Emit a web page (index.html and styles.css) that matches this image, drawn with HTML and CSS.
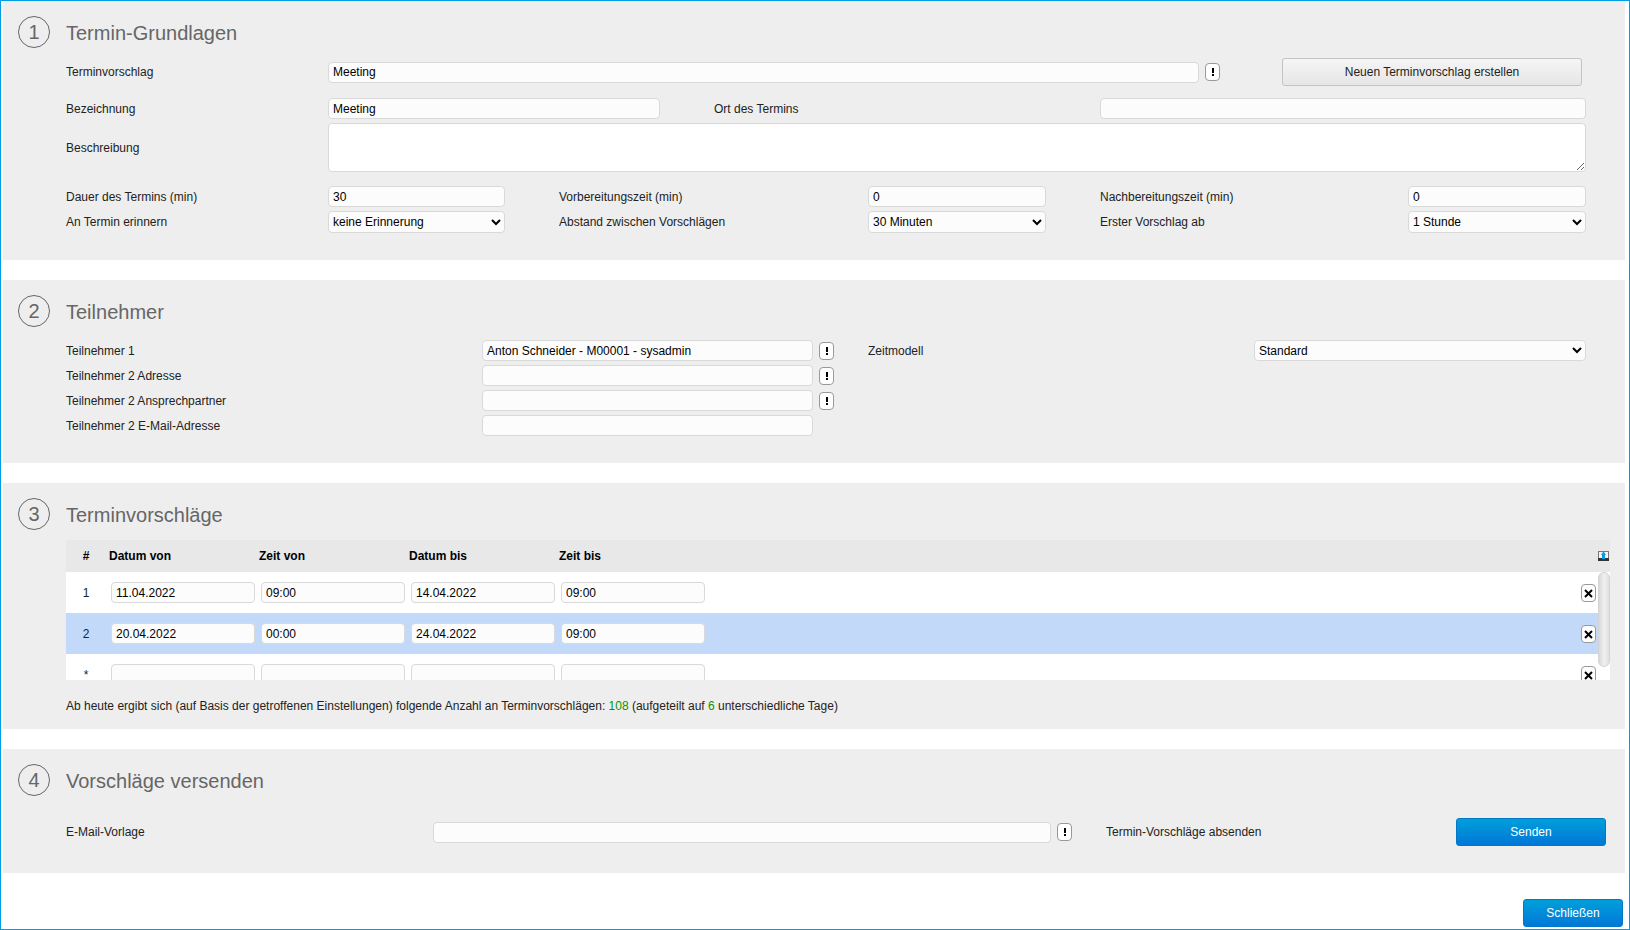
FILE: index.html
```html
<!DOCTYPE html>
<html lang="de">
<head>
    <meta charset="utf-8">
    <title>Terminvorschläge</title>
    <link rel="stylesheet" href="styles.css">
</head>
<body>
<div class="page">
    <svg class="sprite" aria-hidden="true">
        <symbol id="mark" viewBox="0 0 8 8"><path d="M3 0h2v5H3zM3 6h2v2H3z"/></symbol>
        <symbol id="cross" viewBox="0 0 9 9"><path d="M1 1l7 7M8 1L1 8" fill="none" stroke="#000" stroke-width="2"/></symbol>
    </svg>

    <section class="step">
        <h2><span class="number">1</span>Termin-Grundlagen</h2>
        <div class="row row-proposal">
            <label for="proposal">Terminvorschlag</label>
            <div class="lookup">
                <input type="text" id="proposal" value="Meeting">
                <button type="button" class="pick" aria-label="Terminvorschlag auswählen"><svg><use href="#mark"/></svg></button>
            </div>
            <button type="button" class="btn">Neuen Terminvorschlag erstellen</button>
        </div>
        <div class="row row-name">
            <label for="name">Bezeichnung</label>
            <input type="text" id="name" value="Meeting">
            <label for="place" class="second">Ort des Termins</label>
            <input type="text" id="place">
        </div>
        <div class="row row-text">
            <label for="description">Beschreibung</label>
            <textarea id="description"></textarea>
        </div>
        <div class="row row-times">
            <label for="duration">Dauer des Termins (min)</label>
            <input type="text" id="duration" value="30">
            <label for="before" class="second">Vorbereitungszeit (min)</label>
            <input type="text" id="before" value="0">
            <label for="after" class="second">Nachbereitungszeit (min)</label>
            <input type="text" id="after" value="0">

            <label for="remind">An Termin erinnern</label>
            <select id="remind"><option>keine Erinnerung</option></select>
            <label for="distance" class="second">Abstand zwischen Vorschlägen</label>
            <select id="distance"><option>30 Minuten</option></select>
            <label for="first" class="second">Erster Vorschlag ab</label>
            <select id="first"><option>1 Stunde</option></select>
        </div>
    </section>

    <section class="step">
        <h2><span class="number">2</span>Teilnehmer</h2>
        <div class="row row-people">
            <label for="person1" class="person">Teilnehmer 1</label>
            <input type="text" id="person1" value="Anton Schneider - M00001 - sysadmin">
            <button type="button" class="pick" aria-label="Teilnehmer 1 auswählen"><svg><use href="#mark"/></svg></button>
            <label for="model">Zeitmodell</label>
            <select id="model"><option>Standard</option></select>

            <label for="address" class="person">Teilnehmer 2 Adresse</label>
            <input type="text" id="address">
            <button type="button" class="pick" aria-label="Adresse auswählen"><svg><use href="#mark"/></svg></button>

            <label for="contact" class="person">Teilnehmer 2 Ansprechpartner</label>
            <input type="text" id="contact">
            <button type="button" class="pick" aria-label="Ansprechpartner auswählen"><svg><use href="#mark"/></svg></button>

            <label for="mail" class="person">Teilnehmer 2 E-Mail-Adresse</label>
            <input type="text" id="mail">
        </div>
    </section>

    <section class="step step-list">
        <h2><span class="number">3</span>Terminvorschläge</h2>
        <div class="list">
            <table>
                <thead>
                    <tr>
                        <th class="nr">#</th>
                        <th class="date">Datum von</th>
                        <th class="date">Zeit von</th>
                        <th class="date">Datum bis</th>
                        <th class="date">Zeit bis</th>
                        <th></th>
                        <th class="rail">
                            <svg class="export" viewBox="0 0 11 10">
                                <path fill="#777" d="M0 0h11v8H0z"/>
                                <path fill="#f4f4f4" d="M1 1h9v6H1z"/>
                                <path fill="#333" d="M0 7h11v3H0z"/>
                                <path fill="#0a9be0" d="M5 1h1l2 3H7v4H4V4H3z"/>
                            </svg>
                        </th>
                    </tr>
                </thead>
                <tbody>
                    <tr>
                        <td class="nr">1</td>
                        <td><input type="text" aria-label="Datum von" value="11.04.2022"></td>
                        <td><input type="text" aria-label="Zeit von" value="09:00"></td>
                        <td><input type="text" aria-label="Datum bis" value="14.04.2022"></td>
                        <td><input type="text" aria-label="Zeit bis" value="09:00"></td>
                        <td class="remove"><button type="button" class="pick" aria-label="Löschen"><svg class="x"><use href="#cross"/></svg></button></td>
                        <td class="rail"></td>
                    </tr>
                    <tr class="selected">
                        <td class="nr">2</td>
                        <td><input type="text" aria-label="Datum von" value="20.04.2022"></td>
                        <td><input type="text" aria-label="Zeit von" value="00:00"></td>
                        <td><input type="text" aria-label="Datum bis" value="24.04.2022"></td>
                        <td><input type="text" aria-label="Zeit bis" value="09:00"></td>
                        <td class="remove"><button type="button" class="pick" aria-label="Löschen"><svg class="x"><use href="#cross"/></svg></button></td>
                        <td class="rail"></td>
                    </tr>
                    <tr>
                        <td class="nr">*</td>
                        <td><input type="text" aria-label="Datum von"></td>
                        <td><input type="text" aria-label="Zeit von"></td>
                        <td><input type="text" aria-label="Datum bis"></td>
                        <td><input type="text" aria-label="Zeit bis"></td>
                        <td class="remove"><button type="button" class="pick" aria-label="Löschen"><svg class="x"><use href="#cross"/></svg></button></td>
                        <td class="rail"></td>
                    </tr>
                </tbody>
            </table>
            <div class="thumb"></div>
        </div>
        <p class="info">Ab heute ergibt sich (auf Basis der getroffenen Einstellungen) folgende Anzahl an Terminvorschlägen: <span class="count">108</span> (aufgeteilt auf <span class="count">6</span> unterschiedliche Tage)</p>
    </section>

    <section class="step step-send">
        <h2><span class="number">4</span>Vorschläge versenden</h2>
        <div class="row row-send">
            <label for="template">E-Mail-Vorlage</label>
            <div class="lookup">
                <input type="text" id="template">
                <button type="button" class="pick" aria-label="E-Mail-Vorlage auswählen"><svg><use href="#mark"/></svg></button>
            </div>
            <label for="send" class="send-label">Termin-Vorschläge absenden</label>
            <button type="button" id="send" class="btn primary">Senden</button>
        </div>
    </section>

    <div class="footer">
        <button type="button" class="btn primary close">Schließen</button>
    </div>
</div>
</body>
</html>
```
FILE: styles.css
```css
* {
    box-sizing: border-box;
}

body {
    margin: 0;
    background: #fff;
    color: #222;
    font: 12px/16px "Liberation Sans", Arial, sans-serif;
}

.page {
    min-height: 100vh;
    padding: 0 4px 2px 2px;
    border: 1px solid #009ce6;
}

.sprite {
    display: none;
}

.step {
    margin-bottom: 20px;
    padding: 15px 39px 27px 63px;
    background: #eee;
}

.step h2 {
    display: flex;
    align-items: flex-start;
    gap: 16px;
    margin: 0 0 8px -48px;
    color: #666;
    font-size: 20px;
    font-weight: normal;
    line-height: 34px;
}

.number {
    width: 32px;
    height: 32px;
    border: 1px solid #666;
    border-radius: 50%;
    line-height: 30px;
    text-align: center;
}

/* form controls */
input, select, textarea, button {
    margin: 0;
    color: #000;
    font: inherit;
}

input, select, textarea {
    display: block;
    width: 100%;
    min-width: 0;
    height: 21px;
    padding: 0 4px;
    border: 1px solid #d9d9d9;
    border-radius: 4px;
    background: #fcfcfc;
}

select {
    height: 22px;
    padding: 0 2px 0 0;
}

textarea {
    height: 49px;
    background: #fff;
}

.btn {
    height: 28px;
    border: 1px solid #c3c3c3;
    border-radius: 3px;
    background: linear-gradient(#f5f5f5, #e6e6e6);
    color: #222;
}

.primary {
    border-color: #0078c8;
    background: linear-gradient(#009fda, #0078d7);
    color: #fff;
}

.pick {
    display: flex;
    align-items: center;
    justify-content: center;
    flex: none;
    width: 15px;
    height: 18px;
    padding: 0;
    border: 1px solid #999;
    border-radius: 4px;
    background: #fff;
}

.pick svg {
    width: 8px;
    height: 8px;
}

.pick .x {
    width: 9px;
    height: 9px;
}

.lookup {
    display: flex;
    align-items: center;
    gap: 6px;
}

/* rows */
.row {
    display: grid;
    align-items: center;
    row-gap: 4px;
}

.row-proposal {
    grid-template-columns: 262fr 954fr 300fr;
    margin-bottom: 12px;
    padding-right: 4px;
}

.row-proposal .lookup {
    margin-right: 62px;
}

.row-name {
    grid-template-columns: 262fr 332fr 440fr 486fr;
    margin-bottom: 4px;
}

.row-text {
    grid-template-columns: 262fr 1258fr;
    margin-bottom: 14px;
}

.row-times {
    grid-template-columns: 262fr 177fr 363fr 178fr 362fr 178fr;
}

.second {
    padding-left: 54px;
}

.row-people {
    grid-template-columns: 416fr 331fr 55fr 386fr 332fr;
    padding-top: 3px;
}

.person {
    grid-column: 1;
}

.row-people .pick {
    margin-left: 6px;
}

.row-people select {
    height: 21px;
}

/* list of proposals */
.step-list {
    padding-right: 15px;
    padding-bottom: 15px;
}

.list {
    position: relative;
    height: 140px;
    overflow: hidden;
    background: #fff;
}

.list table {
    width: 100%;
    border-collapse: collapse;
    table-layout: fixed;
}

.list th {
    height: 32px;
    padding: 0 3px;
    background: #e8e8e8;
    color: #000;
    text-align: left;
}

.list td {
    height: 41px;
    padding: 0 1px 0 5px;
}

.list .date {
    width: 150px;
}

.list .nr {
    width: 40px;
    padding: 0;
    text-align: center;
}

.list .selected td {
    background: #c3d9f9;
}

.list .remove .pick {
    margin: 1px 1px 0 auto;
}

.list .rail {
    width: 12px;
    padding: 0;
}

.list .selected .rail {
    background: #fff;
}

.export {
    display: block;
    width: 11px;
    height: 10px;
}

.thumb {
    position: absolute;
    top: 32px;
    right: 0;
    width: 12px;
    height: 95px;
    border: 1px solid #d4d4d4;
    border-radius: 6px;
    background: linear-gradient(90deg, #d8d8d8, #f0f0f0 50%, #e0e0e0);
}

.info {
    margin: 18px 0 0;
}

.count {
    color: #090;
}

/* sending */
.step-send {
    margin-bottom: 26px;
    padding-right: 19px;
}

.row-send {
    grid-template-columns: 367fr 639fr 384fr 150fr;
    padding-top: 12px;
}

.send-label {
    padding-left: 34px;
}

.footer {
    display: flex;
    justify-content: flex-end;
    padding-right: 2px;
}

.close {
    width: 100px;
}
```
